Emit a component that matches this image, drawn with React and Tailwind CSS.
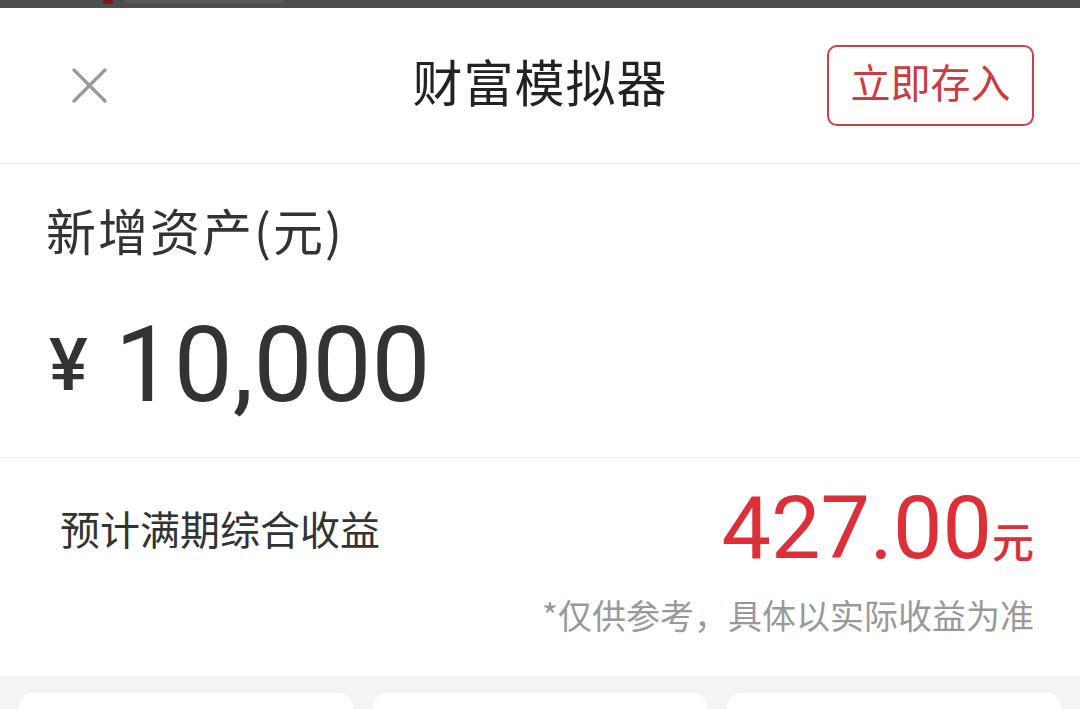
export default function App() {
  const cjk = { fontFamily: '"Noto Sans CJK SC", "Noto Sans", sans-serif' };
  const num = { fontFamily: 'Roboto, "Noto Sans", sans-serif' };

  return (
    <div
      className="w-[1080px] h-[709px] overflow-hidden bg-white text-[#333]"
      style={cjk}
    >
      {/* Status bar remnant */}
      <div className="h-2 bg-[#4d4d4d] flex items-start pl-[103px] gap-3">
        <div className="w-[10px] h-1 bg-[#7a1a22]" />
        <div className="w-[160px] h-[3px] bg-[#575757]" />
      </div>

      {/* Header */}
      <div className="h-[156px] border-b border-[#ebebeb] grid grid-cols-[1fr_auto_1fr] items-center">
        <div className="pl-[72px] flex items-center">
          <svg width="35" height="35" viewBox="0 0 35 35" fill="none">
            <path
              d="M2 2L33 33M33 2L2 33"
              stroke="#9a9a9a"
              strokeWidth="3.2"
              strokeLinecap="round"
            />
          </svg>
        </div>
        <h1 className="pb-[12px] text-[50px] leading-none font-normal text-[#222] tracking-[1px]">
          财富模拟器
        </h1>
        <div className="flex justify-end pr-[46px]">
          <button className="w-[207px] h-[81px] pb-[10px] rounded-[10px] border-2 border-[#cd4048] text-[#cc3a42] text-[40px] leading-none flex items-center justify-center">
            立即存入
          </button>
        </div>
      </div>

      {/* New assets */}
      <div className="h-[294px] border-b border-[#ebebeb] pl-[46px] pt-[40px]">
        <div className="text-[50px] leading-none text-[#333] tracking-[2px]">
          新增资产(元)
        </div>
        <div className="mt-[59px] flex items-end text-[#333] leading-none" style={num}>
          <span className="text-[73px] font-medium mb-[16px] ml-[3px] mr-[27px]">¥</span>
          <span className="text-[105px]">10,000</span>
        </div>
      </div>

      {/* Expected returns */}
      <div className="h-[218px] px-[46px] pt-[26px]">
        <div className="flex items-center justify-between">
          <div className="pl-[14px] text-[40px] leading-none text-[#333]">
            预计满期综合收益
          </div>
          <div className="flex items-baseline text-[#dc2f37] leading-none">
            <span className="text-[88px]" style={num}>
              427.00
            </span>
            <span className="text-[42px] font-medium">元</span>
          </div>
        </div>
        <div className="mt-[26px] text-right text-[34px] leading-none text-[#999]">
          *仅供参考，具体以实际收益为准
        </div>
      </div>

      {/* Bottom cards */}
      <div className="h-[40px] bg-[#f3f4f6] px-[19px] pt-[17px] grid grid-cols-3 gap-[20px]">
        <div className="bg-white rounded-t-[14px] h-[60px]" />
        <div className="bg-white rounded-t-[14px] h-[60px]" />
        <div className="bg-white rounded-t-[14px] h-[60px]" />
      </div>
    </div>
  );
}
